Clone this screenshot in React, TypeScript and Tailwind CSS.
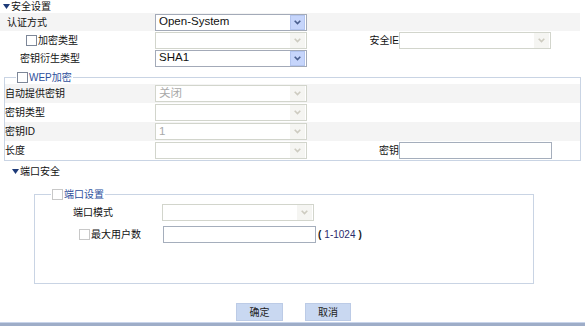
import clsx from "clsx";

function Tri() {
  return (
    <svg width="7" height="5" viewBox="0 0 7 5" className="mr-px">
      <polygon points="0,0 7,0 3.5,5" fill="#1d3a78" />
    </svg>
  );
}

function Chevron({ disabled }: { disabled?: boolean }) {
  return (
    <svg width="7" height="5" viewBox="0 0 7 5">
      <polyline
        points="0.7,0.7 3.5,3.6 6.3,0.7"
        fill="none"
        stroke={disabled ? "#cdcbc0" : "#4a5f8e"}
        strokeWidth="1.6"
      />
    </svg>
  );
}

function Sel({ value, disabled, gray }: { value?: string; disabled?: boolean; gray?: boolean }) {
  return (
    <div
      className={clsx(
        "flex h-[17px] w-[152px] items-center border bg-white",
        disabled ? "border-[#d2d5cc]" : "border-[#a3aab8]"
      )}
    >
      <span
        className={clsx(
          "flex-1 pl-[3px] text-[11.5px] leading-none",
          gray ? "text-[#a9a9a9]" : "text-[#111]"
        )}
      >
        {value}
      </span>
      <span
        className={clsx(
          "mr-px flex h-[15px] w-[15px] items-center justify-center",
          disabled ? "bg-[#f5f5f2]" : "border border-[#b3c5ef] bg-[#c6d5fb]"
        )}
      >
        <Chevron disabled={disabled} />
      </span>
    </div>
  );
}

function Box({ disabled }: { disabled?: boolean }) {
  return (
    <span
      className={clsx(
        "inline-block h-[11px] w-[11px] border bg-white",
        disabled ? "border-[#c8c8c8]" : "border-[#7d8798]"
      )}
    />
  );
}

function Input({ w = "w-[153px]" }: { w?: string }) {
  return <div className={clsx("h-[17px] border border-[#a5aebc] bg-white", w)} />;
}

export default function App() {
  return (
    <div className="h-[326px] w-[585px] overflow-hidden bg-white font-[family-name:'Liberation_Sans','Noto_Sans_CJK_SC',sans-serif] text-[10px] text-[#111]">
      {/* 安全设置 */}
      <div className="flex h-[13px] items-center pl-[3px]">
        <Tri />
        <span>安全设置</span>
      </div>
      <div className="w-[580px]">
        <div className="flex h-[18px] items-center bg-[#f4f4f4]">
          <div className="w-[155px] pl-[7px]">认证方式</div>
          <Sel value="Open-System" />
        </div>
        <div className="flex h-[18px] items-center">
          <div className="flex w-[155px] items-center gap-px pl-[26px]">
            <Box />
            <span>加密类型</span>
          </div>
          <Sel disabled />
          <div className="w-[92px] text-right">安全IE</div>
          <Sel disabled />
        </div>
        <div className="flex h-[18px] items-center">
          <div className="w-[155px] pl-[20px]">密钥衍生类型</div>
          <Sel value="SHA1" />
        </div>
      </div>

      {/* WEP加密 */}
      <fieldset className="mt-[4px] ml-[4px] w-[577px] border border-[#c9d4e4]">
        <legend className="ml-[11px] flex h-[13px] items-center gap-px px-px text-[#2d4f9c]">
          <Box />
          <span>WEP加密</span>
        </legend>
        <div className="flex h-[19px] items-center bg-[#f4f4f4]">
          <div className="w-[150px]">自动提供密钥</div>
          <Sel value="关闭" disabled gray />
        </div>
        <div className="flex h-[19px] items-center">
          <div className="w-[150px]">密钥类型</div>
          <Sel disabled />
        </div>
        <div className="flex h-[19px] items-center bg-[#f4f4f4]">
          <div className="w-[150px]">密钥ID</div>
          <Sel value="1" disabled gray />
        </div>
        <div className="flex h-[19px] items-center">
          <div className="w-[150px]">长度</div>
          <Sel disabled />
          <div className="w-[92px] text-right">密钥</div>
          <Input />
        </div>
      </fieldset>

      {/* 端口安全 */}
      <div className="flex h-[20px] items-center pl-[12px]">
        <Tri />
        <span>端口安全</span>
      </div>
      <fieldset className="mt-[7px] ml-[34px] w-[500px] border border-[#c9d4e4] pt-[3px] pb-[40px]">
        <legend className="ml-[16px] flex h-[13px] items-center gap-px px-px text-[#2d4f9c]">
          <Box disabled />
          <span>端口设置</span>
        </legend>
        <div className="flex h-[17px] items-center">
          <div className="w-[127px] pl-[38px]">端口模式</div>
          <Sel disabled />
        </div>
        <div className="mt-[5px] flex h-[17px] items-center">
          <div className="flex w-[128px] items-center gap-px pl-[44px]">
            <Box disabled />
            <span>最大用户数</span>
          </div>
          <Input />
          <span className="flex items-center gap-[3px] pl-[2px] text-[#222]">
            <span className="font-bold">(</span>
            <span className="text-[#2b2b6b]">1-1024</span>
            <span className="font-bold">)</span>
          </span>
        </div>
      </fieldset>

      {/* buttons */}
      <div className="mt-[19px] flex gap-[22px] pl-[236px]">
        <button className="h-[18px] w-[47px] border border-[#bccbe6] bg-[#c9d8f1] text-[10px] text-[#222]">
          确定
        </button>
        <button className="h-[18px] w-[46px] border border-[#bccbe6] bg-[#c9d8f1] text-[10px] text-[#222]">
          取消
        </button>
      </div>
      <div className="mt-px h-[1px] bg-[#c8d4ea]" />
      <div className="h-[3px] bg-[#9eadc8]" />
    </div>
  );
}
